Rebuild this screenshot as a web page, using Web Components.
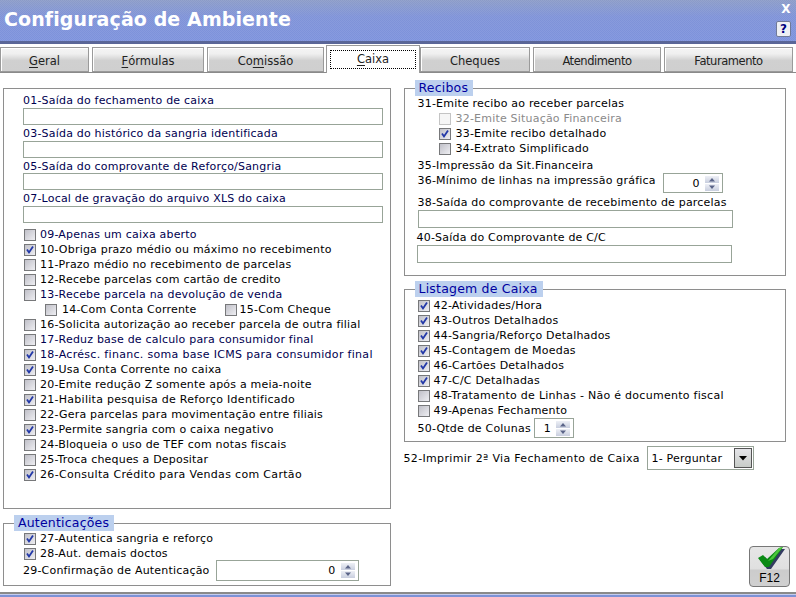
<!DOCTYPE html>
<html>
<head>
<meta charset="utf-8">
<style>
html, body { margin: 0; padding: 0; background: #fff; }
body { width: 796px; height: 597px; overflow: hidden; font: 11px "DejaVu Sans", Verdana, sans-serif; letter-spacing: .2px; color: #000; display: flex; flex-direction: column; }
.columns { flex: 1; display: flex; gap: 13px; padding: 15px 10px 0 3px; min-height: 0; }
.left { width: 388px; display: flex; flex-direction: column; gap: 14px; }
.right { width: 383px; display: flex; flex-direction: column; }
.pair { display: flex; gap: 28px; padding-left: 20px; }
.foot { height: 3px; background: linear-gradient(#c4ccee 1px, #7d92d6 1px); border-top: 2px solid #8a8a8a; margin-top: 5px; }
</style>
</head>
<body>
<title-bar>Configuração de Ambiente</title-bar>
<tab-strip>
  <tab-item w="89" key="G">eral</tab-item>
  <tab-item w="112" key="F">órmulas</tab-item>
  <tab-item w="117" pre="Co" key="m">issão</tab-item>
  <tab-item w="94" key="C" active>aixa</tab-item>
  <tab-item w="110">Cheques</tab-item>
  <tab-item w="128" ls="-.45">Atendimento</tab-item>
  <tab-item w="129" ls="-.45">Faturamento</tab-item>
</tab-strip>
<div class="columns">
  <div class="left">
    <group-box h="421" pad="3">
      <text-field w="360" indent="19" navy>01-Saída do fechamento de caixa</text-field>
      <text-field w="360" indent="19" navy>03-Saída do histórico da sangria identificada</text-field>
      <text-field w="360" indent="19" navy lh="15">05-Saída do comprovante de Reforço/Sangria</text-field>
      <text-field w="360" indent="19" navy>07-Local de gravação do arquivo XLS do caixa</text-field>
      <div style="height:4px"></div>
      <check-row indent="20" navy>09-Apenas um caixa aberto</check-row>
      <check-row indent="20" checked>10-Obriga prazo médio ou máximo no recebimento</check-row>
      <check-row indent="20">11-Prazo médio no recebimento de parcelas</check-row>
      <check-row indent="20">12-Recebe parcelas com cartão de credito</check-row>
      <check-row indent="20" navy>13-Recebe parcela na devolução de venda</check-row>
      <div class="pair">
        <check-row indent="21" gap="5">14-Com Conta Corrente</check-row>
        <check-row gap="3">15-Com Cheque</check-row>
      </div>
      <check-row indent="20">16-Solicita autorização ao receber parcela de outra filial</check-row>
      <check-row indent="20" navy>17-Reduz base de calculo para consumidor final</check-row>
      <check-row indent="20" checked navy ls=".31">18-Acrésc. financ. soma base ICMS para consumidor final</check-row>
      <check-row indent="20" checked>19-Usa Conta Corrente no caixa</check-row>
      <check-row indent="20">20-Emite redução Z somente após a meia-noite</check-row>
      <check-row indent="20" checked ls=".27">21-Habilita pesquisa de Reforço Identificado</check-row>
      <check-row indent="20">22-Gera parcelas para movimentação entre filiais</check-row>
      <check-row indent="20" checked>23-Permite sangria com o caixa negativo</check-row>
      <check-row indent="20">24-Bloqueia o uso de TEF com notas fiscais</check-row>
      <check-row indent="20">25-Troca cheques a Depositar</check-row>
      <check-row indent="20" checked ls=".32">26-Consulta Crédito para Vendas com Cartão</check-row>
    </group-box>
    <group-box h="63" pad="7" legend="Autenticações">
      <check-row indent="20" checked>27-Autentica sangria e reforço</check-row>
      <check-row indent="20" checked>28-Aut. demais doctos</check-row>
      <spin-row indent="19" top="-1" h="21" w="143" value="0">29-Confirmação de Autenticação</spin-row>
    </group-box>
  </div>
  <div class="right">
    <group-box h="188" pad="7" legend="Recibos">
      <plain-row indent="13">31-Emite recibo ao receber parcelas</plain-row>
      <check-row indent="34" gap="5" disabled>32-Emite Situação Financeira</check-row>
      <check-row indent="34" gap="5" checked>33-Emite recibo detalhado</check-row>
      <check-row indent="34" gap="5">34-Extrato Simplificado</check-row>
      <plain-row indent="13" top="2">35-Impressão da Sit.Financeira</plain-row>
      <spin-row indent="13" h="20" w="60" value="0" gap="7" lift="6">36-Mínimo de linhas na impressão gráfica</spin-row>
      <text-field w="315" indent="13" top="1" ih="18">38-Saída do comprovante de recebimento de parcelas</text-field>
      <text-field w="315" indent="12" top="1" ih="18">40-Saída do Comprovante de C/C</text-field>
    </group-box>
    <div style="height:13px"></div>
    <group-box h="153" pad="8" legend="Listagem de Caixa">
      <check-row indent="13" checked>42-Atividades/Hora</check-row>
      <check-row indent="13" checked>43-Outros Detalhados</check-row>
      <check-row indent="13" checked>44-Sangria/Reforço Detalhados</check-row>
      <check-row indent="13" checked>45-Contagem de Moedas</check-row>
      <check-row indent="13" checked>46-Cartões Detalhados</check-row>
      <check-row indent="13" checked>47-C/C Detalhadas</check-row>
      <check-row indent="13" ls=".28">48-Tratamento de Linhas - Não é documento fiscal</check-row>
      <check-row indent="13">49-Apenas Fechamento</check-row>
      <spin-row indent="13" h="20" w="40" value="1" gap="3">50-Qtde de Colunas</spin-row>
    </group-box>
    <combo-row label="52-Imprimir 2ª Via Fechamento de Caixa" value="1- Perguntar"></combo-row>
    <ok-button>F12</ok-button>
  </div>
</div>
<div class="foot"></div>
<script>
const blue = '#000050';

class TitleBar extends HTMLElement {
  constructor() {
    super();
    this.attachShadow({ mode: 'open' }).innerHTML = `
      <style>
        :host { display: flex; height: 41px; justify-content: space-between; padding-left: 4px;
          background: repeating-conic-gradient(rgba(255,255,255,.08) 0 25%, transparent 0 50%) 0 0 / 2px 2px,
            linear-gradient(#8c9cc8, #7f93d8 40%, #7d92dc);
          border-bottom: 3px solid #5a6698; }
        .t { font: bold 19px "DejaVu Sans", sans-serif; color: #fff; letter-spacing: .1px; line-height: 38px; }
        .btns { display: flex; flex-direction: column; align-items: center; padding: 3px 5px 0 0; gap: 5px; }
        .x { font: bold 12px "DejaVu Sans", sans-serif; color: #fff; height: 13px; line-height: 13px; margin-left: 5px; }
        .q { width: 13px; height: 14px; background: #eef0f4; border: 1px solid #707a98; border-radius: 2px;
          font: bold 12px/14px "DejaVu Sans", sans-serif; color: #000080; text-align: center; }
      </style>
      <span class="t"><slot></slot></span>
      <div class="btns"><span class="x">X</span><span class="q">?</span></div>`;
  }
}

class TabStrip extends HTMLElement {
  constructor() {
    super();
    this.attachShadow({ mode: 'open' }).innerHTML = `
      <style>
        :host { display: flex; height: 28px; gap: 3px; border-bottom: 1px solid #8a8a8a; align-items: flex-end; letter-spacing: 0; }
      </style>
      <slot></slot>`;
  }
}

class TabItem extends HTMLElement {
  constructor() {
    super();
    const pre = this.getAttribute('pre') || '';
    const key = this.getAttribute('key');
    const active = this.hasAttribute('active');
    this.attachShadow({ mode: 'open' }).innerHTML = `
      <style>
        :host { display: block; box-sizing: border-box; width: ${this.getAttribute('w')}px;
          height: ${active ? 28 : 25}px; margin: ${active ? '0 -3px -1px -1px' : '0'}; position: relative;
          border: 1px solid #9a9a9a; border-bottom: ${active ? 0 : '1px solid #9a9a9a'};
          background: ${active ? '#fff' : 'linear-gradient(#f4f4f4 0, #f0f0f0 25%, #d0d0d0 55%, #cfcfcf)'};
          box-shadow: inset 1px 1px 0 #fff; letter-spacing: ${this.getAttribute('ls') || 0}px; }
        .l { display: flex; align-items: center; justify-content: center; height: 100%; padding: ${active ? '0 0 1px' : '2px 0 0'};
          box-sizing: border-box; font-size: 11.5px; color: #222; }
        .f { display: ${active ? 'block' : 'none'}; position: absolute; left: 3px; right: 3px; top: 4px; height: 17px; border: 1px dotted #000; }
        u { text-underline-offset: 2px; }
      </style>
      <div class="f"></div>
      <div class="l">${pre}${key ? '<u>' + key + '</u>' : ''}<slot></slot></div>`;
  }
}

class GroupBox extends HTMLElement {
  constructor() {
    super();
    const legend = this.getAttribute('legend');
    this.attachShadow({ mode: 'open' }).innerHTML = `
      <style>
        :host { display: block; box-sizing: border-box; height: ${this.getAttribute('h')}px; position: relative;
          border: 1px solid #8e8e8e; padding-top: ${this.getAttribute('pad')}px; }
        .lg { position: absolute; left: 10px; top: -9px; padding: 0 5px 0 4px; height: 16px; line-height: 16px;
          background: #bcd0ee; color: #0000a0; font-size: 12.5px; letter-spacing: .2px; }
      </style>
      ${legend ? `<div class="lg">${legend}</div>` : ''}
      <slot></slot>`;
  }
}

class CheckRow extends HTMLElement {
  constructor() {
    super();
    const checked = this.hasAttribute('checked');
    const disabled = this.hasAttribute('disabled');
    const color = disabled ? '#8a8a8a' : this.hasAttribute('navy') ? blue : 'inherit';
    const ls = this.getAttribute('ls');
    this.attachShadow({ mode: 'open' }).innerHTML = `
      <style>
        :host { display: flex; align-items: center; height: 15px; padding-left: ${this.getAttribute('indent') || 0}px;
          white-space: nowrap; color: ${color}; ${ls ? `letter-spacing: ${ls}px;` : ''} }
        .b { flex: none; box-sizing: border-box; width: 12px; height: 12px; margin-right: ${this.getAttribute('gap') || 4}px;
          border: 1px solid ${disabled ? '#c4c4c4' : '#77787a'};
          background: ${disabled ? '#f6f6f6' : 'linear-gradient(135deg, #c0c0c8, #eeeef2)'}; }
        svg { display: block; }
      </style>
      <span class="b">${checked ? '<svg width="10" height="10" viewBox="0 0 10 10"><path d="M2 4.5 L4 7.5 L8 1.5" fill="none" stroke="#2238a8" stroke-width="1.8"/></svg>' : ''}</span>
      <span><slot></slot></span>`;
  }
}

class PlainRow extends HTMLElement {
  constructor() {
    super();
    this.attachShadow({ mode: 'open' }).innerHTML = `
      <style>
        :host { display: block; height: 15px; line-height: 15px; margin-top: ${this.getAttribute('top') || 0}px;
          padding-left: ${this.getAttribute('indent') || 0}px; white-space: nowrap; }
      </style>
      <slot></slot>`;
  }
}

class TextField extends HTMLElement {
  constructor() {
    super();
    const lh = Number(this.getAttribute('lh') || 16);
    this.attachShadow({ mode: 'open' }).innerHTML = `
      <style>
        :host { display: block; padding-left: ${this.getAttribute('indent') || 20}px; margin-top: ${this.getAttribute('top') || 0}px; }
        .c { height: ${lh}px; line-height: ${lh + 2}px; color: ${this.hasAttribute('navy') ? blue : 'inherit'}; white-space: nowrap; }
        .i { box-sizing: border-box; width: ${this.getAttribute('w')}px; height: ${this.getAttribute('ih') || 17}px; border: 1px solid #98a498; background: #fff; }
      </style>
      <div class="c"><slot></slot></div>
      <div class="i"></div>`;
  }
}

class SpinBox extends HTMLElement {
  constructor() {
    super();
    this.attachShadow({ mode: 'open' }).innerHTML = `
      <style>
        :host { display: flex; align-items: center; justify-content: flex-end; box-sizing: border-box; height: 100%;
          border: 1px solid #98a498; background: #fff; padding-right: 3px; gap: 5px; }
        .s { display: flex; flex-direction: column; gap: 1px; }
        .s span { display: block; width: 14px; height: 7px; background: linear-gradient(#eef0f6, #c8cede); }
        svg { display: block; }
      </style>
      <slot></slot>
      <div class="s">
        <span><svg width="14" height="7"><path d="M4 5.5 L7 2 L10 5.5Z" fill="#5a6488"/></svg></span>
        <span><svg width="14" height="7"><path d="M4 1.5 L7 5 L10 1.5Z" fill="#5a6488"/></svg></span>
      </div>`;
  }
}

class SpinRow extends HTMLElement {
  constructor() {
    super();
    this.attachShadow({ mode: 'open' }).innerHTML = `
      <style>
        :host { display: flex; align-items: center; height: ${this.getAttribute('h')}px; margin-top: ${this.getAttribute('top') || 0}px;
          padding-left: ${this.getAttribute('indent')}px; gap: ${this.getAttribute('gap') || 6}px; white-space: nowrap; }
        span { margin-bottom: ${this.getAttribute('lift') || 0}px; }
        spin-box { width: ${this.getAttribute('w')}px; }
      </style>
      <span><slot></slot></span>
      <spin-box>${this.getAttribute('value')}</spin-box>`;
  }
}

class ComboRow extends HTMLElement {
  constructor() {
    super();
    this.attachShadow({ mode: 'open' }).innerHTML = `
      <style>
        :host { display: flex; align-items: center; height: 24px; margin-top: 4px; white-space: nowrap; }
        .lb { width: 243px; letter-spacing: .33px; }
        .box { display: flex; align-items: center; justify-content: space-between; box-sizing: border-box; width: 107px; height: 24px;
          border: 1px solid #98a498; padding: 0 1px 0 4px; background: #fff; }
        .arrow { box-sizing: border-box; width: 18px; height: 20px; border: 1px solid #555; background: linear-gradient(#e4e4e8, #c8ccc8); display: flex; align-items: center; justify-content: center; }
        svg { display: block; }
      </style>
      <span class="lb">${this.getAttribute('label')}</span>
      <div class="box"><span>${this.getAttribute('value')}</span>
        <span class="arrow"><svg width="10" height="6"><path d="M1 1 L9 1 L5 5.5Z" fill="#000"/></svg></span>
      </div>`;
  }
}

class OkButton extends HTMLElement {
  constructor() {
    super();
    this.attachShadow({ mode: 'open' }).innerHTML = `
      <style>
        :host { display: flex; flex-direction: column; align-items: center; justify-content: flex-end; box-sizing: border-box;
          width: 41px; height: 41px; margin: auto -4px 0 auto; border: 1px solid #777; border-radius: 4px;
          background: linear-gradient(#e6e6e6, #e0e0e0 55%, #cccccc 60%, #d0d0d0); padding-bottom: 1px;
          font: 12px "Liberation Sans", sans-serif; letter-spacing: 0; }
        svg { display: block; margin: 0 0 1px 4px; }
      </style>
      <svg width="27" height="23" viewBox="0 0 27 23">
        <path d="M2 13 L7 10 L11 14 L23 2 L27 2 L13 22 L9 22Z" fill="#333c60"/>
        <path d="M0 11 L5 8 L9 12 L21 1 L25 0 L11 20 L7 20Z" fill="#0a8a14"/>
        <path d="M21 1 L25 0 L15 12 L10 14Z" fill="#4cc83c"/>
      </svg>
      <span><slot></slot></span>`;
  }
}

customElements.define('title-bar', TitleBar);
customElements.define('tab-strip', TabStrip);
customElements.define('tab-item', TabItem);
customElements.define('group-box', GroupBox);
customElements.define('check-row', CheckRow);
customElements.define('plain-row', PlainRow);
customElements.define('text-field', TextField);
customElements.define('spin-box', SpinBox);
customElements.define('spin-row', SpinRow);
customElements.define('combo-row', ComboRow);
customElements.define('ok-button', OkButton);
</script>
</body>
</html>
